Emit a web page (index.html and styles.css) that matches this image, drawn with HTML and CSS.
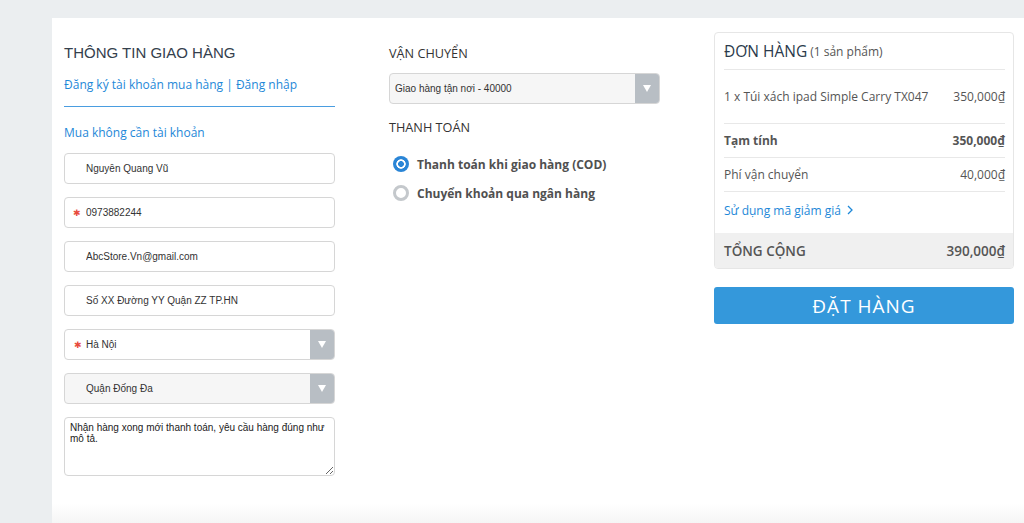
FILE: index.html
```html
<!DOCTYPE html>
<html lang="vi">
<head>
    <meta charset="UTF-8">
    <meta name="viewport" content="width=device-width, initial-scale=1.0">
    <title>Thanh toán đơn hàng</title>
    <link rel="stylesheet" href="styles.css">
</head>
<body>
    <div class="checkout">
        <!-- Thông tin giao hàng -->
        <div class="col">
            <h2 class="title">THÔNG TIN GIAO HÀNG</h2>
            <p class="link">Đăng ký tài khoản mua hàng | Đăng nhập</p>
            <div class="divider"></div>
            <p class="link guest">Mua không cần tài khoản</p>

            <div class="fields">
                <div class="field">
                    <input class="input" type="text" value="Nguyễn Quang Vũ">
                </div>
                <div class="field">
                    <span class="req">✱</span>
                    <input class="input" type="text" value="0973882244">
                </div>
                <div class="field">
                    <input class="input" type="text" value="AbcStore.Vn@gmail.com">
                </div>
                <div class="field">
                    <input class="input" type="text" value="Số XX Đường YY Quận ZZ TP.HN">
                </div>
                <div class="field select-box">
                    <span class="req">✱</span>
                    <select class="select"><option>Hà Nội</option></select>
                    <span class="arrow"><svg width="8" height="7" viewBox="0 0 8 7"><path d="M0 0h8L4 7z" fill="#fff"/></svg></span>
                </div>
                <div class="field select-box grey">
                    <select class="select"><option>Quận Đống Đa</option></select>
                    <span class="arrow"><svg width="8" height="7" viewBox="0 0 8 7"><path d="M0 0h8L4 7z" fill="#fff"/></svg></span>
                </div>
                <textarea class="note">Nhận hàng xong mới thanh toán, yêu cầu hàng đúng như mô tả.</textarea>
            </div>
        </div>

        <!-- Vận chuyển & thanh toán -->
        <div class="col">
            <h3 class="subtitle">VẬN CHUYỂN</h3>
            <div class="select-box grey ship">
                <select class="select"><option>Giao hàng tận nơi - 40000</option></select>
                <span class="arrow"><svg width="8" height="7" viewBox="0 0 8 7"><path d="M0 0h8L4 7z" fill="#fff"/></svg></span>
            </div>
            <h3 class="subtitle pay">THANH TOÁN</h3>
            <div class="radios">
                <label class="radio"><span class="dot checked"></span>Thanh toán khi giao hàng (COD)</label>
                <label class="radio"><span class="dot"></span>Chuyển khoản qua ngân hàng</label>
            </div>
        </div>

        <!-- Đơn hàng -->
        <div class="col">
            <div class="order">
                <div class="order-head">ĐƠN HÀNG <small>(1 sản phẩm)</small></div>
                <div class="row item"><span>1 x Túi xách ipad Simple Carry TX047</span><span>350,000₫</span></div>
                <div class="row bold"><span>Tạm tính</span><span>350,000₫</span></div>
                <div class="row"><span>Phí vận chuyển</span><span>40,000₫</span></div>
                <div class="coupon">Sử dụng mã giảm giá
                    <svg width="6" height="10" viewBox="0 0 6 10"><path d="M1 1l4 4-4 4" fill="none" stroke="#1e88d8" stroke-width="1.3"/></svg>
                </div>
                <div class="total"><span>TỔNG CỘNG</span><span>390,000₫</span></div>
            </div>
            <button class="order-btn">ĐẶT HÀNG</button>
        </div>
    </div>
</body>
</html>
```

FILE: styles.css
```css
/* Chung */
body {
    margin: 0;
    background-color: #ebeef0;
    font-family: 'Open Sans', sans-serif;
    overflow: hidden;
    height: 523px;
}

.checkout {
    margin: 18px 0 0 52px;
    height: 492px;
    padding: 13px 10px 0 12px;
    background: linear-gradient(to bottom, #fff calc(100% - 20px), #f5f5f5);
    display: grid;
    grid-template-columns: 271px 271px 300px;
    column-gap: 54px;
    align-items: start;
}

.col {
    display: flex;
    flex-direction: column;
}

/* Cột trái */
.title {
    margin: 12px 0 0;
    font-family: 'Liberation Sans', Arial, sans-serif;
    font-size: 15px;
    line-height: 20px;
    font-weight: normal;
    color: #34404d;
}

.link {
    margin: 13px 0 0;
    font-size: 12px;
    line-height: 18px;
    color: #1e88d8;
}

.divider {
    margin-top: 12px;
    border-top: 1px solid #4a9de0;
}

.guest {
    margin-top: 17px;
}

.fields {
    margin-top: 11px;
    display: flex;
    flex-direction: column;
    gap: 13px;
}

.field {
    position: relative;
}

.input {
    box-sizing: border-box;
    width: 100%;
    height: 31px;
    padding: 0 0 0 21px;
    border: 1px solid #d6d6d6;
    border-radius: 4px;
    font-family: 'Liberation Sans', Arial, sans-serif;
    font-size: 10px;
    color: #333;
    background: #fff;
    outline: none;
}

.req {
    position: absolute;
    left: 9px;
    top: 50%;
    transform: translateY(-50%);
    font-family: 'DejaVu Sans', sans-serif;
    font-size: 9px;
    color: #e84c3d;
    z-index: 1;
}

/* Select */
.select-box {
    box-sizing: border-box;
    display: flex;
    height: 31px;
    border: 1px solid #d6d6d6;
    border-radius: 4px;
    background: #fff;
    overflow: hidden;
}

.select-box.grey {
    background: #f6f6f6;
}

.select {
    flex: 1;
    appearance: none;
    -webkit-appearance: none;
    border: none;
    background: transparent;
    padding: 0 0 0 21px;
    font-family: 'Liberation Sans', Arial, sans-serif;
    font-size: 10px;
    color: #333;
    outline: none;
}

.arrow {
    width: 24px;
    background-color: #b8bec4;
    display: flex;
    align-items: center;
    justify-content: center;
}

.note {
    box-sizing: border-box;
    width: 100%;
    height: 59px;
    padding: 4px 5px;
    border: 1px solid #d6d6d6;
    border-radius: 4px;
    font-family: 'Liberation Sans', Arial, sans-serif;
    font-size: 10px;
    line-height: 11px;
    color: #222;
    outline: none;
}

/* Cột giữa */
.subtitle {
    margin: 12px 0 0;
    font-size: 12.7px;
    line-height: 20px;
    font-weight: normal;
    color: #333;
}

.ship {
    margin-top: 10px;
}

.ship .select {
    padding-left: 5px;
}

.pay {
    margin-top: 13px;
}

.radios {
    margin-top: 16px;
    display: flex;
    flex-direction: column;
    gap: 7px;
}

.radio {
    display: flex;
    align-items: center;
    gap: 8px;
    height: 22px;
    padding-left: 4px;
    font-size: 12px;
    font-weight: bold;
    color: #505050;
}

.dot {
    box-sizing: border-box;
    width: 16px;
    height: 16px;
    border-radius: 50%;
    border: 3px solid #c4c8cc;
    background: #fff;
}

.dot.checked {
    border: none;
    background: radial-gradient(circle, #2a85d6 0 2.6px, #fff 3.2px 4.4px, #2a85d6 5px);
}

/* Đơn hàng */
.order {
    margin-top: 1px;
    border: 1px solid #e6e6e6;
    border-radius: 4px;
    overflow: hidden;
    color: #555;
    font-size: 12px;
}

.order-head {
    height: 36px;
    margin: 0 8px 0 9px;
    display: flex;
    align-items: center;
    gap: 3px;
    border-bottom: 1px solid #e8e8e8;
    font-size: 15.5px;
    color: #2b3a4c;
}

.order-head small {
    font-size: 12px;
    color: #555;
    padding-top: 1px;
}

.row {
    margin: 0 8px 0 9px;
    height: 33px;
    display: flex;
    justify-content: space-between;
    align-items: center;
    border-bottom: 1px solid #e8e8e8;
}

.row.item {
    height: 54px;
    padding-bottom: 1px;
    box-sizing: border-box;
}

.row.bold {
    font-weight: bold;
}

.coupon {
    height: 41px;
    padding: 10px 0 0 9px;
    box-sizing: border-box;
    color: #1e88d8;
    line-height: 18px;
}

.coupon svg {
    margin-left: 3px;
}

.total {
    height: 35px;
    padding: 0 8px 0 9px;
    display: flex;
    justify-content: space-between;
    align-items: center;
    background-color: #f0f0f0;
    font-size: 13.5px;
    font-weight: 600;
}

.order-btn {
    margin-top: 18px;
    height: 37px;
    border: none;
    border-radius: 3px;
    background-color: #3498db;
    color: #fff;
    font-family: 'Open Sans', sans-serif;
    font-size: 19px;
    letter-spacing: 1px;
    cursor: pointer;
}
```
